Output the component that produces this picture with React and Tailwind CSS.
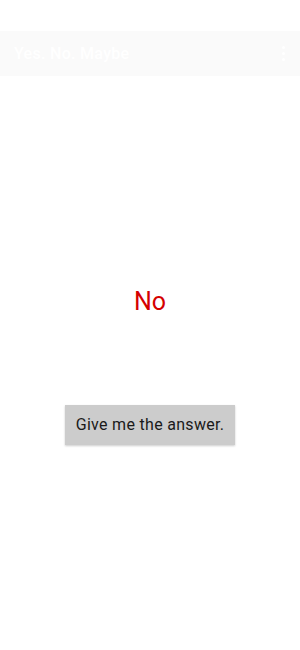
import React from 'react';

const App = () => {
  return (
    <div className="w-[300px] h-[650px] bg-white flex flex-col" style={{ fontFamily: 'Roboto, "Noto Sans", sans-serif' }}>
      {/* app bar */}
      <div className="mt-[31px] h-[45px] bg-[#fafafa] flex items-center justify-between pl-[14px] pr-[12px]">
        <span className="text-white text-[16px] font-medium tracking-[0.3px]">Yes. No. Maybe</span>
        <div className="flex flex-col gap-[3px] items-center pr-[3px]">
          <span className="w-[3px] h-[3px] rounded-full bg-white" />
          <span className="w-[3px] h-[3px] rounded-full bg-white" />
          <span className="w-[3px] h-[3px] rounded-full bg-white" />
        </div>
      </div>

      <div className="flex flex-col items-center pt-[209px]">
        <p className="text-[25px] leading-[34px] text-[#d50000]">No</p>
        <button className="mt-[86px] w-[170px] h-[40px] bg-[#cccccc] text-[16px] tracking-[0.3px] text-[#1a1a1a] shadow-[0_1px_2px_rgba(0,0,0,0.2)]">
          Give me the answer.
        </button>
      </div>
    </div>
  );
};

export default App;
